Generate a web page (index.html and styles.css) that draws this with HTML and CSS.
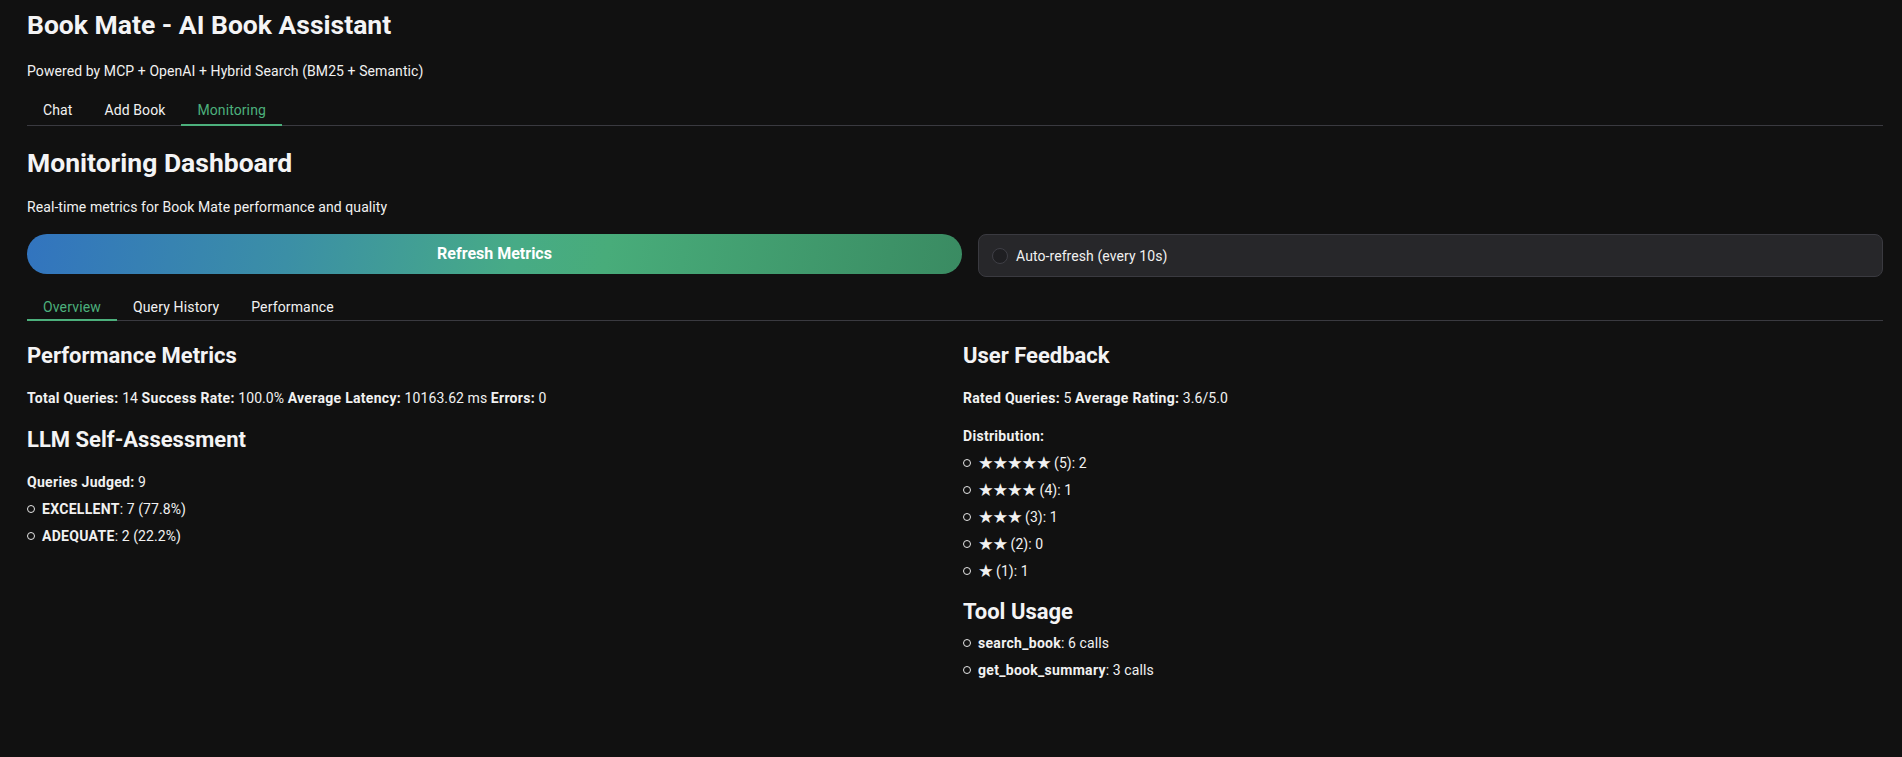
FILE: index.html
```html
<!DOCTYPE html>
<html lang="en">
<head>
<meta charset="utf-8">
<title>Book Mate - AI Book Assistant</title>
<link rel="stylesheet" href="styles.css">
</head>
<body>
<div class="app">
  <h1 class="title">Book Mate - AI Book Assistant</h1>
  <p class="subtitle">Powered by MCP + OpenAI + Hybrid Search (BM25 + Semantic)</p>
  <div class="tabs main-tabs">
    <button class="tab">Chat</button>
    <button class="tab">Add Book</button>
    <button class="tab active">Monitoring</button>
  </div>

  <section class="panel">
    <h1 class="dash-title">Monitoring Dashboard</h1>
    <p class="dash-sub">Real-time metrics for Book Mate performance and quality</p>

    <div class="controls">
      <button class="refresh">Refresh Metrics</button>
      <label class="auto"><span class="check"></span><span>Auto-refresh (every 10s)</span></label>
    </div>

    <div class="tabs sub-tabs">
      <button class="tab active">Overview</button>
      <button class="tab">Query History</button>
      <button class="tab">Performance</button>
    </div>

    <div class="cols">
      <div class="col">
        <h2 class="h2">Performance Metrics</h2>
        <p class="para"><b>Total Queries:</b> 14 <b>Success Rate:</b> 100.0% <b>Average Latency:</b> 10163.62 ms <b>Errors:</b> 0</p>
        <h2 class="h2">LLM Self-Assessment</h2>
        <p class="para tight"><b>Queries Judged:</b> 9</p>
        <ul class="list">
          <li><b>EXCELLENT</b>: 7 (77.8%)</li>
          <li><b>ADEQUATE</b>: 2 (22.2%)</li>
        </ul>
      </div>
      <div class="col">
        <h2 class="h2">User Feedback</h2>
        <p class="para"><b>Rated Queries:</b> 5 <b>Average Rating:</b> 3.6/5.0</p>
        <p class="para tight"><b>Distribution:</b></p>
        <ul class="list">
          <li><span class="stars">★★★★★</span> (5): 2</li>
          <li><span class="stars">★★★★</span> (4): 1</li>
          <li><span class="stars">★★★</span> (3): 1</li>
          <li><span class="stars">★★</span> (2): 0</li>
          <li><span class="stars">★</span> (1): 1</li>
        </ul>
        <h2 class="h2 tight">Tool Usage</h2>
        <ul class="list">
          <li><b>search_book</b>: 6 calls</li>
          <li><b>get_book_summary</b>: 3 calls</li>
        </ul>
      </div>
    </div>
  </section>
</div>
</body>
</html>
```

FILE: styles.css
```css
* { box-sizing: border-box; }

html, body {
  margin: 0;
  background: #111111;
}

body {
  font-family: Roboto, "Liberation Sans", Arial, sans-serif;
  color: #f1f1f1;
  font-size: 14px;
  line-height: 20px;
  letter-spacing: 0.08px;
}

.app {
  padding: 7px 19px 40px 27px;
}

.title {
  margin: 0;
  font-size: 26.5px;
  line-height: 36px;
  font-weight: 700;
  color: #f4f4f5;
  letter-spacing: 0;
}

.subtitle {
  margin: 18px 0 0;
}

.tabs {
  display: flex;
  border-bottom: 1px solid #3a3a40;
}

.tab {
  position: relative;
  background: none;
  border: 0;
  margin: 0;
  font: inherit;
  letter-spacing: 0.1px;
  color: #f1f1f1;
  padding: 4px 16px 5px;
  cursor: pointer;
}

.sub-tabs .tab {
  letter-spacing: 0.15px;
  padding: 4px 16px 3px;
}

.tab.active {
  color: #4cb07c;
}

.tab.active::after {
  content: "";
  position: absolute;
  left: 0;
  right: 0;
  bottom: -1px;
  height: 2px;
  background: #4cb07c;
}

.main-tabs {
  margin-top: 15px;
}

.dash-title {
  margin: 19px 0 0;
  font-size: 26.5px;
  line-height: 36px;
  font-weight: 700;
  color: #f4f4f5;
  letter-spacing: 0;
}

.dash-sub {
  margin: 16px 0 0;
}

.controls {
  display: grid;
  grid-template-columns: 935px 1fr;
  gap: 16px;
  align-items: start;
  margin-top: 17px;
}

.refresh {
  height: 40px;
  border: 0;
  border-radius: 20px;
  background: linear-gradient(100deg, #3274bf 0%, #3b8fa6 28%, #47ab86 52%, #48ac7a 62%, #3a8b62 100%);
  color: #ffffff;
  font: inherit;
  font-size: 16px;
  font-weight: 700;
  cursor: pointer;
}

.auto {
  display: flex;
  align-items: center;
  gap: 8px;
  height: 43px;
  padding: 0 13px;
  background: #27272a;
  border: 1px solid #3a3a40;
  border-radius: 8px;
  color: #f1f1f1;
}

.check {
  width: 16px;
  height: 16px;
  border-radius: 50%;
  border: 1px solid #3f3f46;
  background: #1f1f22;
}

.sub-tabs {
  margin-top: 16px;
}

.cols {
  display: grid;
  grid-template-columns: 1fr 1fr;
  gap: 16px;
  margin-top: 21px;
}

.col {
  display: flex;
  flex-direction: column;
}

.h2 {
  margin: 0 0 18px;
  font-size: 22px;
  line-height: 28px;
  font-weight: 700;
  color: #f4f4f5;
  letter-spacing: 0;
}

.h2.tight { margin-bottom: 7px; }

.para {
  margin: 0 0 18px;
}

.para.tight { margin-bottom: 7px; }

.para b, .list b {
  font-weight: 700;
  letter-spacing: 0.3px;
}

.list {
  list-style: none;
  margin: 0 0 17px;
  padding: 0;
  display: flex;
  flex-direction: column;
  gap: 7px;
}

.list li {
  display: flex;
  align-items: center;
  white-space: pre;
}

.list li::before {
  content: "";
  width: 6px;
  height: 6px;
  border: 1px solid #e6e6e6;
  border-radius: 50%;
  margin-right: 7px;
  flex: none;
}

.stars {
  font-family: "DejaVu Sans", sans-serif;
  font-size: 17.5px;
  line-height: 20px;
  letter-spacing: -1.2px;
}
```
